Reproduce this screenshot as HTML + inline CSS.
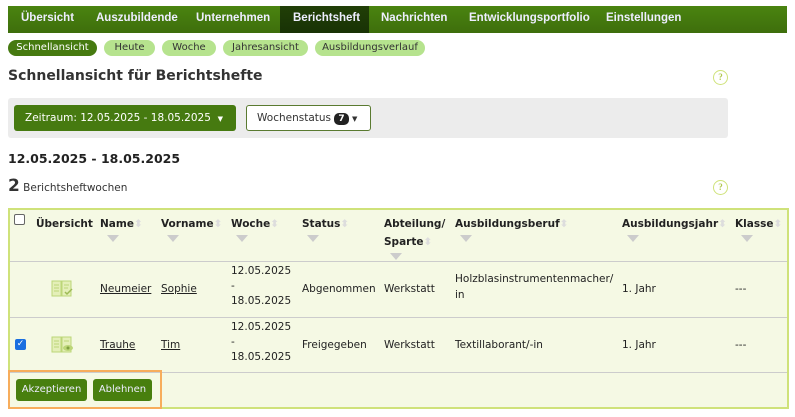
<!DOCTYPE html><html><head><meta charset="utf-8"><style>
*{box-sizing:border-box;margin:0;padding:0}
body{width:795px;height:417px;background:#fff;font-family:"DejaVu Sans","Liberation Sans",sans-serif;font-size:11px;color:#333;position:relative;overflow:hidden}
.a{position:absolute;white-space:nowrap}
.nav{left:8px;top:6px;width:779px;height:27px;background:linear-gradient(#4a8410,#3e6e0c)}
.nav span{position:absolute;top:6px;color:#eef;font-size:11.5px;font-weight:bold;font-family:"Liberation Sans",sans-serif}
.act{position:absolute;left:272px;top:0;width:89px;height:27px;background:linear-gradient(#213f07,#183205)}
.pill{position:absolute;top:40px;height:16px;border-radius:8px;background:#b6e38e;color:#333;font-size:10px;text-align:center;line-height:16px}
.help{width:15px;height:15px;border:1.5px solid #cfe27a;border-radius:50%;color:#b0c650;font-size:9px;font-weight:bold;text-align:center;line-height:12px;font-family:"Liberation Serif",serif}
.th{position:absolute;top:215px;font-weight:bold;font-size:10.5px;color:#222;line-height:18px}
.f{display:block;width:0;height:0;border-left:6px solid transparent;border-right:6px solid transparent;border-top:7px solid #ccc;margin-top:2px}
.td{position:absolute;font-size:10.5px;line-height:21px;color:#222}
u{text-decoration:underline}
.btn{position:absolute;top:379px;height:22px;background:#487f0e;color:#eef;border-radius:3px;font-size:10px;line-height:22px;text-align:center}
.ico{position:absolute;width:22px;height:17px}
</style></head><body>
<div class="a nav"><div class="act"></div>
<span style="left:13px">Übersicht</span><span style="left:88px">Auszubildende</span><span style="left:188px">Unternehmen</span><span style="left:285px">Berichtsheft</span><span style="left:373px">Nachrichten</span><span style="left:461px">Entwicklungsportfolio</span><span style="left:598px">Einstellungen</span></div>
<div class="pill" style="left:8px;width:89px;background:#467a10;color:#fff">Schnellansicht</div>
<div class="pill" style="left:104px;width:51px">Heute</div>
<div class="pill" style="left:162px;width:54px">Woche</div>
<div class="pill" style="left:223px;width:85px">Jahresansicht</div>
<div class="pill" style="left:315px;width:110px">Ausbildungsverlauf</div>
<div class="a" style="left:8px;top:68px;font-size:14px;font-weight:bold;color:#333">Schnellansicht für Berichtshefte</div>
<div class="a help" style="left:713px;top:70px">?</div>
<div class="a" style="left:8px;top:98px;width:720px;height:40px;background:#ececec;border-radius:3px"></div>
<div class="a" style="left:14px;top:105px;width:222px;height:26px;background:#467a10;border-radius:3px;color:#fff;font-size:10.5px;line-height:26px;padding-left:11px">Zeitraum: 12.05.2025 - 18.05.2025 &nbsp;<span style="font-size:7px">▼</span></div>
<div class="a" style="left:246px;top:105px;width:125px;height:26px;background:#fff;border:1px solid #5a7a30;border-radius:3px;font-size:10.5px;line-height:24px;padding-left:10px">Wochenstatus <span style="display:inline-block;background:#222;color:#fff;border-radius:5px;font-size:9px;font-weight:bold;line-height:12px;padding:0 4px">7</span> <span style="font-size:7px">▼</span></div>
<div class="a" style="left:8px;top:151px;font-size:12.5px;font-weight:bold;color:#222">12.05.2025 - 18.05.2025</div>
<div class="a" style="left:8px;top:176px;font-size:10.5px"><span style="font-size:17px;font-weight:bold">2</span> Berichtsheftwochen</div>
<div class="a help" style="left:713px;top:180px">?</div>
<div class="a" style="left:8px;top:208px;width:781px;height:201px;background:#f5f9e4;border:2px solid #cfe27a"></div>
<div class="a" style="left:10px;top:261px;width:777px;height:1px;background:#ccc"></div>
<div class="a" style="left:10px;top:317px;width:777px;height:1px;background:#ccc"></div>
<div class="a" style="left:10px;top:372px;width:777px;height:1px;background:#ccc"></div>
<div class="a" style="left:14px;top:214px;width:11px;height:11px;border:1px solid #666;border-radius:2px;background:#fff"></div>
<div class="th" style="left:36px">Übersicht</div>
<div class="th" style="left:100px">Name<span style="color:#ddd">⬍</span><i class="f" style="margin-left:7px"></i></div>
<div class="th" style="left:161px">Vorname<span style="color:#ddd">⬍</span><i class="f" style="margin-left:6px"></i></div>
<div class="th" style="left:231px">Woche<span style="color:#ddd">⬍</span><i class="f" style="margin-left:5px"></i></div>
<div class="th" style="left:302px">Status<span style="color:#ddd">⬍</span><i class="f" style="margin-left:5px"></i></div>
<div class="th" style="left:384px">Abteilung/<br>Sparte<span style="color:#ddd">⬍</span><i class="f" style="margin-left:6px"></i></div>
<div class="th" style="left:455px">Ausbildungsberuf<span style="color:#ddd">⬍</span><i class="f" style="margin-left:5px"></i></div>
<div class="th" style="left:622px">Ausbildungsjahr<span style="color:#ddd">⬍</span><i class="f" style="margin-left:5px"></i></div>
<div class="th" style="left:735px">Klasse<span style="color:#ddd">⬍</span><i class="f" style="margin-left:6px"></i></div>
<svg class="ico" style="left:51px;top:280px" viewBox="0 0 22 17"><rect x="1" y="1" width="9" height="15" fill="#e4efb8" stroke="#bcd678"/><rect x="11" y="1" width="9" height="15" fill="#e4efb8" stroke="#bcd678"/><path d="M3 5h5M3 8h5M3 11h5M13 5h5M13 8h4" stroke="#bcd678"/><path d="M14 12l2 2 5-5" stroke="#9dbb55" fill="none" stroke-width="1.5"/></svg>
<svg class="ico" style="left:51px;top:336px" viewBox="0 0 22 17"><rect x="1" y="1" width="9" height="15" fill="#e4efb8" stroke="#bcd678"/><rect x="11" y="1" width="9" height="15" fill="#e4efb8" stroke="#bcd678"/><path d="M3 5h5M3 8h5M3 11h5M13 5h5" stroke="#bcd678"/><ellipse cx="17" cy="12" rx="5" ry="3" fill="#bcd678"/><circle cx="17" cy="12" r="1.5" fill="#7fa040"/></svg>
<div class="td" style="left:100px;top:279px"><u>Neumeier</u></div>
<div class="td" style="left:161px;top:279px"><u>Sophie</u></div>
<div class="td" style="left:231px;top:264px;line-height:15px">12.05.2025<br>-<br>18.05.2025</div>
<div class="td" style="left:302px;top:279px">Abgenommen</div>
<div class="td" style="left:384px;top:279px">Werkstatt</div>
<div class="td" style="left:455px;top:271px;line-height:16px">Holzblasinstrumentenmacher/<br>in</div>
<div class="td" style="left:622px;top:279px">1. Jahr</div>
<div class="td" style="left:735px;top:279px">---</div>
<div class="a" style="left:15px;top:339px;width:11px;height:11px;background:#1a6fe0;border-radius:2px;color:#fff;font-size:9px;line-height:11px;text-align:center">✓</div>
<div class="td" style="left:100px;top:335px"><u>Trauhe</u></div>
<div class="td" style="left:161px;top:335px"><u>Tim</u></div>
<div class="td" style="left:231px;top:320px;line-height:15px">12.05.2025<br>-<br>18.05.2025</div>
<div class="td" style="left:302px;top:335px">Freigegeben</div>
<div class="td" style="left:384px;top:335px">Werkstatt</div>
<div class="td" style="left:455px;top:335px">Textillaborant/-in</div>
<div class="td" style="left:622px;top:335px">1. Jahr</div>
<div class="td" style="left:735px;top:335px">---</div>
<div class="a" style="left:8px;top:370px;width:154px;height:39px;border:2px solid #f7ad5c"></div>
<div class="btn" style="left:16px;width:71px">Akzeptieren</div>
<div class="btn" style="left:93px;width:59px">Ablehnen</div>
</body></html>
